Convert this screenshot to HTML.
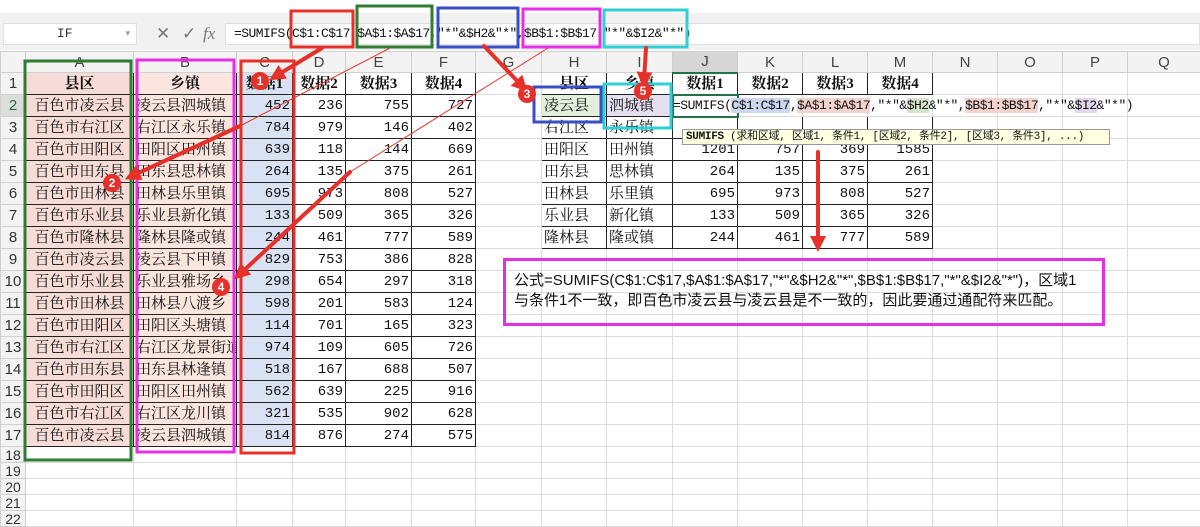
<!DOCTYPE html>
<html><head><meta charset="utf-8"><style>
*{margin:0;padding:0;box-sizing:border-box}
body{width:1200px;height:516px;overflow:hidden;background:#fff;position:relative;font-family:"Liberation Serif","Noto Serif CJK SC",serif;}
.top{position:absolute;left:0;top:13px;width:1200px;height:37px;background:#f1f1f1;}
.nb{position:absolute;left:3px;top:23px;width:134px;height:22px;background:#fff;border:1px solid #e0e0e0;font:13px "Liberation Mono",monospace;text-align:center;line-height:20px;color:#333}
.fb{position:absolute;left:225px;top:23px;width:975px;height:22px;background:#fff;border:1px solid #e0e0e0;}
.ft{position:absolute;left:234px;top:26px;font:13px "Liberation Mono",monospace;letter-spacing:-0.55px;color:#111;white-space:pre}
.ic{position:absolute;top:24px;font:17px "Liberation Sans",sans-serif;color:#777}
table{position:absolute;left:0;top:51px;width:1200px;border-collapse:collapse;table-layout:fixed}
td{border:1px solid #dcdcdc;height:22px;line-height:20px;font-size:15px;padding:0 2px;white-space:nowrap;overflow:hidden;color:#111}
tr.h td{height:21px;line-height:19px;background:#f3f3f3;text-align:center;color:#444;font:15px "Liberation Sans",sans-serif;border-color:#d0d0d0}
tr.s td{height:16px;line-height:14px;font-size:14px}
td.r{background:#f3f3f3;text-align:center;color:#333;font-family:"Liberation Sans",sans-serif;padding:0;border-color:#d0d0d0}
td.k{border:1px solid #222}
td.a{background:#f6dcd6;text-align:center}
td.b{background:#fbe5df}
td.c{background:#d9e2f2}
td.n{text-align:right;font:14px "Liberation Mono",monospace}
td.t{text-align:center;font-weight:bold}
.tip{position:absolute;left:682px;top:129px;width:428px;height:16px;background:#ffffe1;border:1px solid #999;font:11px "Liberation Mono","Noto Sans CJK SC",monospace;line-height:14px;padding-left:3px;white-space:nowrap;overflow:hidden;color:#111;letter-spacing:-0.3px}
.j2{position:absolute;left:673px;top:98px;font:13px "Liberation Mono","Noto Sans CJK SC",monospace;letter-spacing:-0.5px;white-space:pre;color:#111}
.note{position:absolute;left:503px;top:258px;width:602px;height:68px;border:3px solid #e52ee5;font:15px "Liberation Sans","Noto Sans CJK SC",sans-serif;padding:10px 0 0 8px;line-height:20px;color:#111;background:transparent}
svg{position:absolute;left:0;top:0}
</style></head><body>
<div class="top"></div>
<div class="nb">IF <span style="float:right;margin-right:6px;color:#999;font-size:9px">▾</span></div>
<div class="ic" style="left:156px">✕</div><div class="ic" style="left:182px">✓</div><div class="ic" style="left:203px;font-style:italic;font-family:'Liberation Serif',serif">fx</div>
<div class="fb"></div>
<div class="ft">=SUMIFS(C$1:C$17,$A$1:$A$17,"*"&amp;$H2&amp;"*",$B$1:$B$17,"*"&amp;$I2&amp;"*")</div>
<table>
<colgroup><col style="width:25px"><col style="width:108px"><col style="width:103px"><col style="width:56px"><col style="width:53px"><col style="width:66px"><col style="width:64px"><col style="width:66px"><col style="width:65px"><col style="width:66px"><col style="width:65px"><col style="width:65px"><col style="width:65px"><col style="width:65px"><col style="width:65px"><col style="width:65px"><col style="width:65px"><col style="width:73px"></colgroup>
<tr class="h"><td></td><td>A</td><td>B</td><td>C</td><td>D</td><td>E</td><td>F</td><td>G</td><td>H</td><td>I</td><td style="background:#d6d6d6;border-bottom:2px solid #217346">J</td><td>K</td><td>L</td><td>M</td><td>N</td><td>O</td><td>P</td><td>Q</td></tr>
<tr><td class="r">1</td><td class="k a t">县区</td><td class="k b t" style="text-align:center">乡镇</td><td class="k c t">数据1</td><td class="k t">数据2</td><td class="k t">数据3</td><td class="k t">数据4</td><td></td><td class="k t">县区</td><td class="k t">乡镇</td><td class="k t">数据1</td><td class="k t">数据2</td><td class="k t">数据3</td><td class="k t">数据4</td><td></td><td></td><td></td><td></td></tr>
<tr><td class="r" style="color:#217346;background:#dcdcdc">2</td><td class="k a">百色市凌云县</td><td class="k b">凌云县泗城镇</td><td class="k c n">452</td><td class="k n">236</td><td class="k n">755</td><td class="k n">727</td><td></td><td class="k" style="background:#e2efda">凌云县</td><td class="k" style="background:#e6dff0">泗城镇</td><td style="border:2px solid #217346"></td><td></td><td></td><td></td><td></td><td></td><td></td><td></td></tr>
<tr><td class="r">3</td><td class="k a">百色市右江区</td><td class="k b">右江区永乐镇</td><td class="k c n">784</td><td class="k n">979</td><td class="k n">146</td><td class="k n">402</td><td></td><td class="k">右江区</td><td class="k">永乐镇</td><td class="k"></td><td class="k"></td><td class="k"></td><td class="k"></td><td></td><td></td><td></td><td></td></tr>
<tr><td class="r">4</td><td class="k a">百色市田阳区</td><td class="k b">田阳区田州镇</td><td class="k c n">639</td><td class="k n">118</td><td class="k n">144</td><td class="k n">669</td><td></td><td class="k">田阳区</td><td class="k">田州镇</td><td class="k n">1201</td><td class="k n">757</td><td class="k n">369</td><td class="k n">1585</td><td></td><td></td><td></td><td></td></tr>
<tr><td class="r">5</td><td class="k a">百色市田东县</td><td class="k b">田东县思林镇</td><td class="k c n">264</td><td class="k n">135</td><td class="k n">375</td><td class="k n">261</td><td></td><td class="k">田东县</td><td class="k">思林镇</td><td class="k n">264</td><td class="k n">135</td><td class="k n">375</td><td class="k n">261</td><td></td><td></td><td></td><td></td></tr>
<tr><td class="r">6</td><td class="k a">百色市田林县</td><td class="k b">田林县乐里镇</td><td class="k c n">695</td><td class="k n">973</td><td class="k n">808</td><td class="k n">527</td><td></td><td class="k">田林县</td><td class="k">乐里镇</td><td class="k n">695</td><td class="k n">973</td><td class="k n">808</td><td class="k n">527</td><td></td><td></td><td></td><td></td></tr>
<tr><td class="r">7</td><td class="k a">百色市乐业县</td><td class="k b">乐业县新化镇</td><td class="k c n">133</td><td class="k n">509</td><td class="k n">365</td><td class="k n">326</td><td></td><td class="k">乐业县</td><td class="k">新化镇</td><td class="k n">133</td><td class="k n">509</td><td class="k n">365</td><td class="k n">326</td><td></td><td></td><td></td><td></td></tr>
<tr><td class="r">8</td><td class="k a">百色市隆林县</td><td class="k b">隆林县隆或镇</td><td class="k c n">244</td><td class="k n">461</td><td class="k n">777</td><td class="k n">589</td><td></td><td class="k">隆林县</td><td class="k">隆或镇</td><td class="k n">244</td><td class="k n">461</td><td class="k n">777</td><td class="k n">589</td><td></td><td></td><td></td><td></td></tr>
<tr><td class="r">9</td><td class="k a">百色市凌云县</td><td class="k b">凌云县下甲镇</td><td class="k c n">829</td><td class="k n">753</td><td class="k n">386</td><td class="k n">828</td><td></td><td></td><td></td><td></td><td></td><td></td><td></td><td></td><td></td><td></td><td></td></tr>
<tr><td class="r">10</td><td class="k a">百色市乐业县</td><td class="k b">乐业县雅场乡</td><td class="k c n">298</td><td class="k n">654</td><td class="k n">297</td><td class="k n">318</td><td></td><td></td><td></td><td></td><td></td><td></td><td></td><td></td><td></td><td></td><td></td></tr>
<tr><td class="r">11</td><td class="k a">百色市田林县</td><td class="k b">田林县八渡乡</td><td class="k c n">598</td><td class="k n">201</td><td class="k n">583</td><td class="k n">124</td><td></td><td></td><td></td><td></td><td></td><td></td><td></td><td></td><td></td><td></td><td></td></tr>
<tr><td class="r">12</td><td class="k a">百色市田阳区</td><td class="k b">田阳区头塘镇</td><td class="k c n">114</td><td class="k n">701</td><td class="k n">165</td><td class="k n">323</td><td></td><td></td><td></td><td></td><td></td><td></td><td></td><td></td><td></td><td></td><td></td></tr>
<tr><td class="r">13</td><td class="k a">百色市右江区</td><td class="k b">右江区龙景街道</td><td class="k c n">974</td><td class="k n">109</td><td class="k n">605</td><td class="k n">726</td><td></td><td></td><td></td><td></td><td></td><td></td><td></td><td></td><td></td><td></td><td></td></tr>
<tr><td class="r">14</td><td class="k a">百色市田东县</td><td class="k b">田东县林逢镇</td><td class="k c n">518</td><td class="k n">167</td><td class="k n">688</td><td class="k n">507</td><td></td><td></td><td></td><td></td><td></td><td></td><td></td><td></td><td></td><td></td><td></td></tr>
<tr><td class="r">15</td><td class="k a">百色市田阳区</td><td class="k b">田阳区田州镇</td><td class="k c n">562</td><td class="k n">639</td><td class="k n">225</td><td class="k n">916</td><td></td><td></td><td></td><td></td><td></td><td></td><td></td><td></td><td></td><td></td><td></td></tr>
<tr><td class="r">16</td><td class="k a">百色市右江区</td><td class="k b">右江区龙川镇</td><td class="k c n">321</td><td class="k n">535</td><td class="k n">902</td><td class="k n">628</td><td></td><td></td><td></td><td></td><td></td><td></td><td></td><td></td><td></td><td></td><td></td></tr>
<tr><td class="r">17</td><td class="k a">百色市凌云县</td><td class="k b">凌云县泗城镇</td><td class="k c n">814</td><td class="k n">876</td><td class="k n">274</td><td class="k n">575</td><td></td><td></td><td></td><td></td><td></td><td></td><td></td><td></td><td></td><td></td><td></td></tr>
<tr class="s"><td class="r">18</td><td></td><td></td><td></td><td></td><td></td><td></td><td></td><td></td><td></td><td></td><td></td><td></td><td></td><td></td><td></td><td></td><td></td></tr>
<tr class="s"><td class="r">19</td><td></td><td></td><td></td><td></td><td></td><td></td><td></td><td></td><td></td><td></td><td></td><td></td><td></td><td></td><td></td><td></td><td></td></tr>
<tr class="s"><td class="r">20</td><td></td><td></td><td></td><td></td><td></td><td></td><td></td><td></td><td></td><td></td><td></td><td></td><td></td><td></td><td></td><td></td><td></td></tr>
<tr class="s"><td class="r">21</td><td></td><td></td><td></td><td></td><td></td><td></td><td></td><td></td><td></td><td></td><td></td><td></td><td></td><td></td><td></td><td></td><td></td></tr>
<tr class="s"><td class="r">22</td><td></td><td></td><td></td><td></td><td></td><td></td><td></td><td></td><td></td><td></td><td></td><td></td><td></td><td></td><td></td><td></td><td></td></tr>
</table>
<div class="j2">=SUMIFS(<span style="background:#cdd8ef">C$1:C$17</span>,<span style="background:#f3d3cd">$A$1:$A$17</span>,"*"&amp;<span style="background:#d5e6cc">$H2</span>&amp;"*",<span style="background:#f3d3cd">$B$1:$B$17</span>,"*"&amp;<span style="background:#e0d6ee">$I2</span>&amp;"*")</div>
<div class="tip"><b>SUMIFS</b> (求和区域, 区域1, 条件1, [区域2, 条件2], [区域3, 条件3], ...)</div>
<div class="note">公式=SUMIFS(C$1:C$17,$A$1:$A$17,"*"&amp;$H2&amp;"*",$B$1:$B$17,"*"&amp;$I2&amp;"*")，区域1<br>与条件1不一致，即百色市凌云县与凌云县是不一致的，因此要通过通配符来匹配。</div>
<svg width="1200" height="516" viewBox="0 0 1200 516">
<defs><marker id="m" markerWidth="4" markerHeight="4" refX="2" refY="2" orient="auto"><path d="M0,0 L4,2 L0,4 z" fill="#e8302a"/></marker></defs>
<g fill="none" stroke-width="3">
<rect x="291" y="11" width="62" height="36" stroke="#e8302a"/>
<rect x="357" y="6" width="75" height="41" stroke="#2e7d32"/>
<rect x="438" y="8" width="80" height="39" stroke="#3a4fc4"/>
<rect x="523" y="9" width="77" height="38" stroke="#e52ee5"/>
<rect x="604" y="10" width="83" height="37" stroke="#2ecfd6"/>
<rect x="25" y="61" width="106" height="399" stroke="#2e7d32"/>
<rect x="137" y="60" width="97" height="392" stroke="#e52ee5"/>
<rect x="241" y="61" width="53" height="392" stroke="#e8302a"/>
<rect x="534" y="87" width="67" height="35" stroke="#3a4fc4"/>
<rect x="604" y="84" width="67" height="44" stroke="#2ecfd6"/>
</g>
<g stroke="#e8302a" fill="none" stroke-linecap="round">
<line x1="390" y1="48" x2="240" y2="126" stroke-width="1"/>
<line x1="240" y1="126" x2="132" y2="176" stroke-width="4" marker-end="url(#m)"/>
<line x1="548" y1="48" x2="350" y2="172" stroke-width="1"/>
<line x1="350" y1="172" x2="240" y2="274" stroke-width="4" marker-end="url(#m)"/>
<line x1="322" y1="48" x2="276" y2="76" stroke-width="4" marker-end="url(#m)"/>
<line x1="484" y1="46" x2="522" y2="86" stroke-width="4" marker-end="url(#m)"/>
<line x1="646" y1="48" x2="644" y2="80" stroke-width="4" marker-end="url(#m)"/>
<line x1="818" y1="152" x2="818" y2="244" stroke-width="4" marker-end="url(#m)"/>
</g>
<g fill="#e8302a"><circle cx="260" cy="81" r="9"/><circle cx="112" cy="183" r="9"/><circle cx="527" cy="94" r="9"/><circle cx="221" cy="287" r="9"/><circle cx="643" cy="91" r="9"/></g>
<g fill="#fff" font-family="Liberation Sans" font-size="12" font-weight="bold" text-anchor="middle"><text x="260" y="85">1</text><text x="112" y="187">2</text><text x="527" y="98">3</text><text x="221" y="291">4</text><text x="643" y="95">5</text></g>
</svg>
</body></html>
